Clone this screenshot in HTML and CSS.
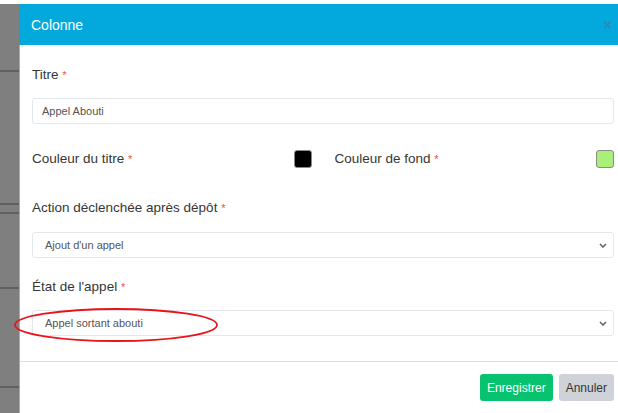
FILE: index.html
```html
<!doctype html>
<html>
  <head>
    <meta charset="utf-8">
    <link rel="stylesheet" href="styles.css">
  </head>
  <body>
    <div class="page">
      <div class="backdrop"></div>
      <div class="modal">
        <div class="modal-header">
          <span class="modal-title">Colonne</span>
          <span class="close">&times;</span>
        </div>
        <div class="modal-body">
          <div class="field">
            <label>Titre <span class="req">*</span></label>
            <div class="input">Appel Abouti</div>
          </div>
          <div class="colors">
            <div class="color-field">
              <label>Couleur du titre <span class="req">*</span></label>
              <span class="swatch black"></span>
            </div>
            <div class="color-field">
              <label>Couleur de fond <span class="req">*</span></label>
              <span class="swatch green"></span>
            </div>
          </div>
          <div class="field action">
            <label>Action déclenchée après dépôt <span class="req">*</span></label>
            <div class="input select">
              <span>Ajout d'un appel</span>
              <svg class="chevron" width="8" height="5" viewBox="0 0 8 5"><path d="M1 1l3 3 3-3" fill="none" stroke="#5a6470" stroke-width="1.5"/></svg>
            </div>
          </div>
          <div class="field state">
            <label>État de l'appel <span class="req">*</span></label>
            <div class="input select">
              <span>Appel sortant abouti</span>
              <svg class="chevron" width="8" height="5" viewBox="0 0 8 5"><path d="M1 1l3 3 3-3" fill="none" stroke="#5a6470" stroke-width="1.5"/></svg>
              <!-- hand-drawn highlight -->
              <svg class="circle" width="206" height="36" viewBox="0 0 206 36"><ellipse cx="103" cy="18" rx="101" ry="16" fill="none" stroke="#e8141a" stroke-width="1.8"/></svg>
            </div>
          </div>
        </div>
        <div class="modal-footer">
          <button class="btn save">Enregistrer</button>
          <button class="btn cancel">Annuler</button>
        </div>
      </div>
    </div>
  </body>
</html>
```
FILE: styles.css
```css
html, body {
  margin: 0;
  padding: 0;
  background: #fff;
}
body {
  font-family: "Liberation Sans", Arial, sans-serif;
  color: #333;
  padding-top: 4px;
}
.page {
  display: flex;
  height: 409px;
}
.backdrop {
  width: 19px;
  flex: none;
  background:
    linear-gradient(#7f7f7f 0, #7f7f7f 66px, #606060 66px, #606060 68px, #7f7f7f 68px,
      #7f7f7f 199px, #606060 199px, #606060 201px, #7f7f7f 201px,
      #7f7f7f 208px, #606060 208px, #606060 210px, #7f7f7f 210px,
      #7f7f7f 283px, #606060 283px, #606060 285px, #7f7f7f 285px,
      #7f7f7f 382px, #606060 382px, #606060 384px, #7f7f7f 384px);
}
.modal {
  flex: 1;
  display: flex;
  flex-direction: column;
  border-left: 1px solid #62c3e8;
  background: #fff;
}
.modal-header {
  height: 41px;
  background: #03a9dc;
  display: flex;
  align-items: center;
  justify-content: space-between;
  padding: 0 6px 0 12px;
  margin-left: -1px;
}
.modal-title {
  color: #fff;
  font-size: 14px;
}
.close {
  color: #2c8bb0;
  font-size: 15px;
  font-weight: bold;
}
.modal-body {
  padding: 22px 4px 25px 12px;
}
label {
  display: block;
  font-size: 13.5px;
  line-height: 16px;
  color: #363636;
}
.req {
  color: #f04a4a;
  font-size: 11px;
}
.input {
  height: 24px;
  border: 1px solid #e4e7eb;
  border-radius: 3px;
  margin-top: 15px;
  font-size: 11px;
  color: #555;
  display: flex;
  align-items: center;
  padding: 0 9px;
}
.select {
  padding: 0 6px 0 12px;
  justify-content: space-between;
  position: relative;
}
.colors {
  display: grid;
  grid-template-columns: 1fr 1fr;
  column-gap: 23px;
  margin-top: 26px;
}
.color-field {
  display: flex;
  align-items: center;
  justify-content: space-between;
  height: 18px;
}
.swatch {
  width: 16px;
  height: 16px;
  border: 1px solid #8a8a8a;
  border-radius: 3px;
}
.black {
  background: #000;
}
.green {
  background: #a9ef79;
}
.action {
  margin-top: 32px;
}
.action .input {
  margin-top: 16px;
}
.state {
  margin-top: 21px;
}
.state .input {
  margin-top: 15px;
}
.circle {
  position: absolute;
  left: -20px;
  top: -4px;
}
.modal-footer {
  border-top: 1px solid #dcdcdc;
  display: flex;
  justify-content: flex-end;
  gap: 6px;
  padding: 12px 4px 0 0;
}
.btn {
  height: 27px;
  border: 0;
  border-radius: 3px;
  font-family: "Liberation Sans", Arial, sans-serif;
  font-size: 12px;
  padding: 0 7px;
}
.save {
  background: #07c26e;
  color: #fff;
}
.cancel {
  background: #cfd3d9;
  color: #333;
}
```
